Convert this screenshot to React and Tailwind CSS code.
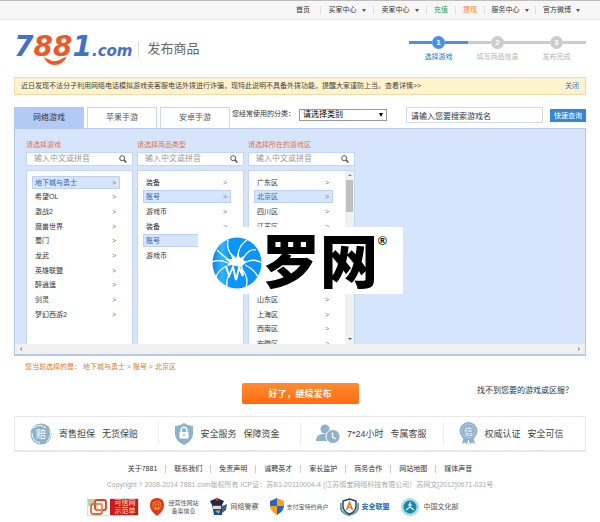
import React from "react";

const navItems = [
  { label: "首页", w: "w-[34px]" },
  { label: "买家中心", arrow: true, w: "w-[53px]" },
  { label: "卖家中心", arrow: true, w: "w-[53px]" },
  { label: "充值", w: "w-[29px]", color: "text-[#1f9d4d]" },
  { label: "提现", w: "w-[29px]", color: "text-[#f58220]" },
  { label: "服务中心", arrow: true, w: "w-[51px]" },
  { label: "官方微博", arrow: true, w: "w-[52px]" },
];

const steps = ["选择游戏", "填写商品信息", "发布完成"];

const columns = [
  {
    id: "game",
    title: "请选择游戏",
    active: [0],
    items: ["地下城与勇士", "希望OL", "激战2", "魔兽世界", "蜀门", "龙武", "英雄联盟", "醉逍遥", "剑灵", "梦幻西游2"],
  },
  {
    id: "type",
    title: "请选择商品类型",
    active: [1, 4],
    items: ["装备", "账号", "游戏币", "装备", "账号", "游戏币"],
  },
  {
    id: "area",
    title: "请选择所在的游戏区",
    active: [1],
    scroll: true,
    items: ["广东区", "北京区", "四川区", "江苏区", null, null, null, null, "山东区", "上海区", "西南区", "安徽区"],
  },
];

const footerLinks = ["关于7881", "联系我们", "免责声明", "诚聘英才", "家长监护", "商务合作", "网站地图", "媒体声音"];

function TopBar() {
  return (
    <nav className="flex h-5 items-center justify-end border-t border-b border-t-[#bdbdbd] border-b-[#e6e6e6] bg-[#f7f7f7] pr-[13px]">
      {navItems.map((n, i) => (
        <a
          key={n.label}
          href="#"
          className={`${n.w} ${n.color || "text-[#333]"} flex h-2 items-center justify-center gap-[5px] leading-[8px] ${i ? "border-l border-[#ddd]" : ""}`}
        >
          {n.label}
          {n.arrow && <span className="h-0 w-0 border-x-2 border-t-[3px] border-x-transparent border-t-[#555]" />}
        </a>
      ))}
    </nav>
  );
}

function Logo() {
  return (
    <div className="relative flex items-baseline font-[DejaVu_Sans,sans-serif] font-bold italic">
      <span className="text-[28px] leading-[26px] text-[#4471c4]">7</span>
      <span className="text-[28px] leading-[26px] text-[#ec5a2c]">88</span>
      <span className="text-[28px] leading-[26px] text-[#4471c4]">1</span>
      <span className="text-[15px] leading-[26px] text-[#4471c4]">.com</span>
      <svg className="absolute top-[23px] left-[28px]" width="26" height="9" viewBox="0 0 26 9" aria-hidden="true">
        <path d="M1 0 L6 2 Q14 7 21 1 L25 0 Q20 8 13 8 Q6 8 3 2 Z" fill="#ec5a2c" />
      </svg>
    </div>
  );
}

function Steps() {
  return (
    <ol className="grid w-[177px] grid-cols-3">
      {steps.map((s, i) => (
        <li key={s} className="flex flex-col items-center gap-[3px]">
          <div className="flex w-full items-center">
            <span className={`h-[3px] flex-1 ${i ? "bg-[#ccc]" : "bg-[#4a90e8]"}`} />
            <span
              className={`flex h-[13px] w-[13px] items-center justify-center rounded-full text-[8px] leading-[8px] font-bold text-white ${i ? "bg-[#ccc]" : "bg-[#4a90e8]"}`}
            >
              {i + 1}
            </span>
            <span className={`h-[3px] flex-1 ${i ? "bg-[#ccc]" : "bg-[#4a90e8]"}`} />
          </div>
          <span className={`leading-[10px] ${i ? "text-[#b5b5b5]" : "text-[#1c72c4]"}`}>{s}</span>
        </li>
      ))}
    </ol>
  );
}

function SearchIcon() {
  return (
    <svg width="8" height="8" viewBox="0 0 8 8" fill="none" stroke="#444" aria-hidden="true">
      <circle cx="3.2" cy="3.2" r="2.5" strokeWidth="0.9" />
      <path d="M5 5 L7.4 7.4" strokeWidth="1.4" />
    </svg>
  );
}

function Column({ col }) {
  return (
    <section className="w-[107px]">
      <label htmlFor={col.id} className="block leading-[10px] text-[#e8743a]">
        {col.title}
      </label>
      <div className="mt-[2px] flex h-[14px] items-center border border-[#c5d6f0] bg-white pr-[5px]">
        <input
          id={col.id}
          placeholder="输入中文或拼音"
          className="h-3 min-w-0 flex-1 pl-[7px] text-[8px] leading-[12px] outline-none placeholder:text-[#999]"
        />
        <SearchIcon />
      </div>
      <div className="mt-1 flex h-[174px] overflow-hidden border border-b-0 border-[#c5d6f0] bg-white">
        <ul className="mt-1 grid h-[176px] flex-1 grid-rows-12 pr-3 pl-[5px]">
          {col.items.map((t, i) => (
            <li key={i} className="flex items-center">
              {t && (
                <button
                  type="button"
                  className={`flex h-[13px] w-full items-center justify-between border pr-[3px] pl-[2px] leading-[11px] ${
                    col.active.includes(i) ? "border-[#bcd2f3] bg-[#d6e5fc] text-[#2f62b5]" : "border-transparent text-[#333]"
                  }`}
                >
                  <span>{t}</span>
                  <span className="text-[#777]">&gt;</span>
                </button>
              )}
            </li>
          ))}
        </ul>
        {col.scroll && (
          <div className="flex w-[9px] flex-col items-center bg-[#f1f1f1]" aria-hidden="true">
            <span className="mt-[3px] h-0 w-0 border-x-2 border-b-2 border-x-transparent border-b-[#888]" />
            <span className="mt-1 h-8 w-[7px] bg-[#bfbfbf]" />
            <span className="mt-auto mb-1 h-0 w-0 border-x-2 border-t-2 border-x-transparent border-t-[#555]" />
          </div>
        )}
      </div>
    </section>
  );
}

function Watermark() {
  return (
    <div className="absolute top-[120px] left-[184px] flex h-[67px] w-[205px] items-center bg-white pt-1 pl-[14px] text-black">
      <svg width="50" height="52" viewBox="0 0 50 52" aria-hidden="true">
        <defs>
          <linearGradient id="globe" x1="0" x2="1">
            <stop offset="0" stopColor="#0a84f0" />
            <stop offset="0.2" stopColor="#35b4fb" />
            <stop offset="0.35" stopColor="#0b95fb" />
            <stop offset="1" stopColor="#0f93f5" />
          </linearGradient>
        </defs>
        <ellipse cx="25" cy="26" rx="24.5" ry="25.5" fill="url(#globe)" />
        <path
          d="M19 16 L24 21 L26 16 L28 21 L34 18 L31 23 L35 25 L31 28 L28 30 L20 28 L15 29 L17 25 L13 22 L20 22 Z"
          fill="#fff"
        />
        <path d="M14 29 L17 39 L21 30 L24 43 L27 31 L31 39 L29 27" fill="none" stroke="#fff" strokeWidth="2" />
        <g fill="none" stroke="#fff" strokeWidth="1.3">
          <path d="M21 20 Q14 12 16 3" />
          <path d="M26 18 Q27 8 35 3" />
          <path d="M32 20 Q38 11 44 13" />
          <path d="M34 25 Q42 21 50 26" />
          <path d="M33 28 Q42 32 46 40" />
          <path d="M31 33 Q37 42 34 50" />
          <path d="M17 23 Q10 18 5 13" />
          <path d="M16 26 Q8 22 0 25" />
          <path d="M15 29 Q6 33 4 40" />
          <path d="M17 38 Q14 43 15 49" />
        </g>
      </svg>
      <span className="text-[58px] leading-[58px] font-black">罗网</span>
      <span className="mb-auto pt-1 font-[Liberation_Sans,sans-serif] text-[12px] leading-[12px] font-bold">®</span>
    </div>
  );
}

function Picker() {
  return (
    <main className="relative mt-3">
      <div className="flex items-start">
        <div className="flex gap-[3px]">
          {["网络游戏", "苹果手游", "安卓手游"].map((t, i) => (
            <button
              key={t}
              type="button"
              className={`h-[21px] w-[70px] border border-b-0 text-[8px] leading-[12px] ${
                i ? "border-[#c8d8f0] bg-white text-[#555]" : "border-[#b3cbf4] bg-[#b3cbf4] text-[#333]"
              }`}
            >
              {t}
            </button>
          ))}
        </div>
        <label htmlFor="category" className="mt-[2px] ml-[2px] leading-[10px] text-[#333]">
          您经常使用的分类：
        </label>
        <div className="relative mt-[2px] ml-1">
          <select
            id="category"
            className="block h-3 w-[88px] appearance-none border border-[#999] bg-white pl-[3px] text-[8px] leading-[10px] text-black"
          >
            <option>请选择类别</option>
          </select>
          <span className="pointer-events-none absolute top-1 right-1 h-0 w-0 border-x-2 border-t-4 border-x-transparent border-t-black" />
        </div>
        <input
          aria-label="搜索游戏"
          defaultValue="请输入您要搜索游戏名"
          className="ml-auto h-4 w-[137px] border border-[#d5dbe6] pl-1 text-[8px] leading-[12px] text-[#333] outline-none"
        />
        <button type="button" className="mt-[2px] ml-[7px] h-[13px] w-9 bg-[#3388d2] leading-[11px] text-white">
          快速查询
        </button>
      </div>
      <div className="border border-b-2 border-[#b5caea] bg-[#d6e5fc]">
        <div className="flex gap-1 pt-[11px] pl-[11px]">
          {columns.map((c) => (
            <Column key={c.id} col={c} />
          ))}
        </div>
        <div className="flex h-[10px] items-center justify-between bg-[#f0f0f0] px-[5px]" aria-hidden="true">
          <span className="h-0 w-0 border-y-2 border-r-2 border-y-transparent border-r-[#999]" />
          <span className="h-0 w-0 border-y-2 border-l-2 border-y-transparent border-l-[#999]" />
        </div>
      </div>
      <Watermark />
    </main>
  );
}

function Benefits() {
  const icons = [
    <svg key="a" width="22" height="22" viewBox="0 0 22 22">
      <circle cx="11" cy="11" r="10.5" fill="#8fb2cc" />
      <path d="M3 5 Q10 0 16 5 M20 6 Q22 15 16 19 M2 10 Q2 18 10 20" fill="none" stroke="#fff" strokeWidth="1" />
      <text x="11" y="15" textAnchor="middle" fontSize="10" fill="#fff">赔</text>
    </svg>,
    <svg key="b" width="20" height="22" viewBox="0 0 20 22">
      <path d="M10 0 Q14 3 19 3 V11 Q19 18 10 22 Q1 18 1 11 V3 Q6 3 10 0 Z" fill="#8fb2cc" />
      <path d="M7.2 9 V7 A2.8 2.8 0 0 1 12.8 7 V9" fill="none" stroke="#fff" strokeWidth="1.4" />
      <rect x="5.5" y="9" width="9" height="6.5" fill="#fff" />
      <rect x="9.4" y="10.8" width="1.2" height="2.6" fill="#8fb2cc" />
    </svg>,
    <svg key="c" width="24" height="20" viewBox="0 0 24 20">
      <circle cx="9" cy="5" r="4.5" fill="#8fb2cc" />
      <path d="M0 17 Q0 10 7 10 H12 V17 Z" fill="#8fb2cc" />
      <circle cx="17" cy="12.5" r="7" fill="#8fb2cc" stroke="#fff" strokeWidth="1" />
      <path d="M16.5 8.5 V13 L20 15" fill="none" stroke="#fff" strokeWidth="1.4" />
    </svg>,
    <svg key="d" width="19" height="23" viewBox="0 0 19 23">
      <path d="M5 14 L3 22 L6 20.5 L8 22.5 L9.5 17 L11 22.5 L13 20.5 L16 22 L14 14 Z" fill="#8fb2cc" />
      <circle cx="9.5" cy="9" r="9" fill="#8fb2cc" />
      <circle cx="9.5" cy="9" r="6.8" fill="none" stroke="#c4d7e5" strokeWidth="0.7" />
      <text x="9.5" y="12.5" textAnchor="middle" fontSize="9" fill="#fff">信</text>
    </svg>,
  ];
  const texts = [
    ["寄售担保", "无货保赔"],
    ["安全服务", "保障资金"],
    ["7*24小时", "专属客服"],
    ["权威认证", "安全可信"],
  ];
  return (
    <section className="mt-3 grid h-9 grid-cols-4 border border-b-2 border-[#e8e8e8] text-[9px] leading-[12px] text-[#444]">
      {texts.map((t, i) => (
        <div key={i} className={`my-[5px] flex items-center gap-[7px] pl-[15px] ${i ? "border-l border-[#eee]" : ""}`}>
          {icons[i]}
          <span>{t[0]}</span>
          <span>{t[1]}</span>
        </div>
      ))}
    </section>
  );
}

function Badges() {
  return (
    <div className="mt-[7px] flex h-[19px] items-center justify-center gap-[11px] pr-[54px] leading-[8px] text-[#555]">
      <div className="flex h-[18px] w-[52px] items-center border border-[#ddd]">
        <svg width="22" height="17" viewBox="0 0 22 17" aria-hidden="true">
          <rect width="22" height="17" fill="#fff" />
          <path d="M0 1 H9 L4 8 H0 Z" fill="#b9cfae" />
          <rect x="7" y="2" width="11" height="10" rx="2" fill="none" stroke="#d9412b" strokeWidth="1.8" />
          <rect x="3" y="6" width="11" height="10" rx="2" fill="none" stroke="#e36a35" strokeWidth="1.8" />
          <rect x="9" y="6" width="5" height="6" fill="none" stroke="#f0b060" />
        </svg>
        <span className="flex-1 bg-[#c9181e] pl-1 text-left whitespace-nowrap text-[#ffe9b0]">
          可信网
          <br />
          示范单
        </span>
      </div>
      <div className="flex items-center gap-1">
        <svg width="14" height="18" viewBox="0 0 14 18" aria-hidden="true">
          <path d="M7 0 Q14 0 14 7 Q14 13 7 18 Q0 13 0 7 Q0 0 7 0 Z" fill="#dd3a1c" />
          <circle cx="7" cy="7.5" r="4.5" fill="#f09a35" />
          <path d="M4 10 V6 L7 4 L10 6 V10 M7 4 V11 M4 8 H10" fill="none" stroke="#d3321a" />
        </svg>
        <span className="text-[6px]">
          经营性网站
          <br />
          备案信息
        </span>
      </div>
      <div className="flex items-center gap-[3px]">
        <svg width="18" height="18" viewBox="0 0 18 18" aria-hidden="true">
          <path d="M0 3 L7 0 L14 3 L12 7 H2 Z" fill="#1d2b4f" />
          <circle cx="7" cy="1.6" r="1.5" fill="#d8322a" />
          <path d="M2 7 H12 V17 H4 Z" fill="#2a467e" />
          <path d="M3 8 H11 V11 H3 Z" fill="#e8d9c5" />
          <path d="M12 8 L17 6 L16 12 L12 15 Z" fill="#44607f" />
          <path d="M5 13 L10 12 L9 16 Z" fill="#86aadf" />
        </svg>
        <span>网络警察</span>
      </div>
      <div className="flex items-center gap-[3px]">
        <svg width="14" height="17" viewBox="0 0 14 17" aria-hidden="true">
          <path d="M7 0 L0 3 V8 H7 Z M7 8 H14 Q14 13 7 17 Z" fill="#2b66b8" />
          <path d="M7 0 L14 3 V8 H7 Z M7 8 H0 Q0 13 7 17 Z" fill="#f5a21d" />
        </svg>
        <span className="text-[6px]">支付宝特约商户</span>
      </div>
      <div className="flex items-center gap-[3px] font-bold text-[#2a6aa8]">
        <svg width="19" height="18" viewBox="0 0 19 18" aria-hidden="true">
          <path d="M1 5 Q-1 15 9 17 Q20 15 18 5" fill="none" stroke="#64a08f" strokeWidth="2" />
          <path d="M9.500 1 L16 3 V9 Q15 14 9.500 16 Q4 14 3 9 V3 Z" fill="#fff" stroke="#1f3d66" strokeWidth="1.4" />
          <path d="M6.500 12 L9.500 4.500 L12.500 12 M7.500 9.500 H11.500" fill="none" stroke="#ee7722" strokeWidth="1.6" />
        </svg>
        <span>安全联盟</span>
      </div>
      <div className="flex items-center gap-[5px]">
        <svg width="18" height="18" viewBox="0 0 18 18" aria-hidden="true">
          <circle cx="9" cy="9" r="9" fill="#a9dbe9" />
          <circle cx="9" cy="9" r="6.500" fill="#1688ad" />
          <path d="M9 4 V9 L5 12 M9 9 L13 12 M7 7 H11" fill="none" stroke="#fff" strokeWidth="1.1" />
        </svg>
        <span>中国文化部</span>
      </div>
    </div>
  );
}

export default function App() {
  return (
    <div className="bg-white font-[Liberation_Sans,Noto_Sans_CJK_SC,sans-serif] text-[7px] leading-[10px]">
      <TopBar />
      <div className="mx-[14px]">
        <header className="flex items-center pt-[14px]">
          <Logo />
          <h1 className="ml-[6px] border-l border-[#ddd] pl-2 text-[13px] leading-[16px] text-[#666]">发布商品</h1>
          <div className="ml-auto">
            <Steps />
          </div>
        </header>
        <div className="mt-[13px] flex h-[18px] items-center justify-between border border-[#f0dca8] bg-[#fff3cd] px-[6px] text-[#444]">
          <p>近日发现不法分子利用网络电话模拟游戏卖客服电话外拨进行诈骗，现特此说明不具备外拨功能，提醒大家谨防上当。查看详情&gt;&gt;</p>
          <button type="button" className="leading-[10px] text-[#2878c8]">关闭</button>
        </div>
        <Picker />
        <p className="mt-[6px] ml-[11px] leading-[10px] text-[#dd7a2b]">您当前选择的是： 地下城与勇士 &gt; 账号 &gt; 北京区</p>
        <div className="mt-[11px] grid grid-cols-[1fr_auto_1fr]">
          <button
            type="button"
            className="col-start-2 h-[21px] w-[117px] rounded-xs bg-linear-to-b from-[#ff8c2e] to-[#ff6a0c] text-[9px] leading-[12px] font-bold text-white"
          >
            好了，继续发布
          </button>
          <a href="#" className="mt-[2px] mr-[13px] justify-self-end text-[8px] leading-[12px] text-[#333]">
            找不到您要的游戏或区服？
          </a>
        </div>
        <Benefits />
        <footer className="pt-[13px] text-center">
          <div className="flex justify-center">
            {footerLinks.map((t, i) => (
              <a key={t} href="#" className={`h-2 px-2 leading-[8px] text-[#333] ${i ? "border-l border-[#ccc]" : ""}`}>
                {t}
              </a>
            ))}
          </div>
          <p className="mt-[7px] leading-[10px] text-[#aaa]">
            Copyright ? 2008-2014 7881.com版权所有 ICP证：苏B1-20110004-4 (江苏慎宝网络科技有限公司）苏网文[2012]0671-031号
          </p>
          <Badges />
        </footer>
      </div>
    </div>
  );
}
